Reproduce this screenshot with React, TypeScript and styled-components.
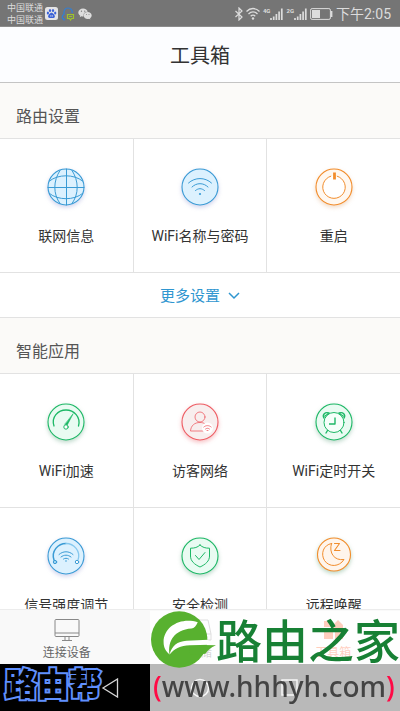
import React from "react";
import styled, { createGlobalStyle } from "styled-components";
import { FaWeixin } from "react-icons/fa";

const Global = createGlobalStyle`
  * { box-sizing: border-box; }
  body { margin: 0; background: #fff; }
  button { font: inherit; color: inherit; border: 0; padding: 0; margin: 0; background: none; cursor: pointer; }
  h1, h2 { margin: 0; font-weight: 400; }
`;

const BLUE = "#3a9bd5";
const GREEN = "#1db866";
const RED = "#ee5d64";
const ORANGE = "#f28d2c";

const Screen = styled.div`
  position: relative;
  display: flex;
  flex-direction: column;
  height: 100vh;
  overflow: hidden;
  color: #333;
  font-family: Roboto, "Noto Sans CJK SC", sans-serif;
`;

const StatusBar = styled.div`
  flex: none;
  display: flex;
  align-items: center;
  justify-content: space-between;
  height: 27px;
  padding: 1px 9px 0 7px;
  background: #757575;
  border-bottom: 1px solid #8c8c8c;
  color: #dcdcdc;
`;

const StatusGroup = styled.div<{ $gap: number }>`
  display: flex;
  align-items: center;
  gap: ${(p) => p.$gap}px;
`;

const Carriers = styled.div`
  font-size: 9px;
  line-height: 12px;
`;

const Network = styled.div`
  display: flex;
  align-items: flex-start;
  height: 14px;
  font: 700 6px/7px Roboto, sans-serif;
`;

const Clock = styled.span`
  font-size: 14px;
  line-height: 20px;
`;

const TitleBar = styled.header`
  flex: none;
  display: flex;
  align-items: center;
  justify-content: center;
  height: 56px;
  background: #fcfdff;
  border-bottom: 1px solid #c4c4c4;
`;

const Title = styled.h1`
  padding-top: 2px;
  font-size: 20px;
  line-height: 28px;
`;

const Content = styled.main`
  flex: 1;
  min-height: 0;
  overflow-y: auto;
  scrollbar-width: none;
`;

const SectionTitle = styled.h2`
  padding: 22px 16px 9px;
  background: #fbfaf8;
  border-bottom: 1px solid #e2e2e2;
  color: #555;
  font-size: 16px;
  line-height: 24px;
`;

const Tools = styled.div`
  display: grid;
  grid-template-columns: repeat(3, 1fr);
  gap: 1px;
  background: #e2e2e2;
  border-bottom: 1px solid #e2e2e2;
`;

const ToolButton = styled.button`
  && {
    display: flex;
    flex-direction: column;
    align-items: center;
    gap: 19px;
    padding: 28px 0 26px;
    background: #fff;
    font-size: 14px;
    line-height: 20px;
    white-space: nowrap;
  }
`;

const Disc = styled.svg<{ $shadow: string }>`
  width: 40px;
  height: 40px;
  overflow: visible;
  fill: none;
  stroke-linecap: round;
  stroke-linejoin: round;
  filter: drop-shadow(0 2px 2px ${(p) => p.$shadow});
`;

const MoreButton = styled.button`
  && {
    display: flex;
    align-items: center;
    justify-content: center;
    gap: 8px;
    width: 100%;
    height: 45px;
    padding-top: 2px;
    border-bottom: 1px solid #e2e2e2;
    background: #fff;
    color: #2f96d0;
    font-size: 15px;
    line-height: 24px;
  }
`;

const TabBar = styled.nav`
  flex: none;
  display: grid;
  grid-template-columns: repeat(3, 1fr);
  height: 55px;
  background: #f9f9f9;
  border-top: 1px solid #ececec;
`;

const Tab = styled.button<{ $active?: boolean }>`
  && {
    display: flex;
    flex-direction: column;
    align-items: center;
    padding-top: 8px;
    gap: 2px;
    color: ${(p) => (p.$active ? "#ff4a10" : "#666")};
    font-size: 12px;
    line-height: 18px;
  }
`;

const SystemNav = styled.nav`
  flex: none;
  display: flex;
  align-items: center;
  justify-content: center;
  gap: 70px;
  height: 47px;
  background: #000;
`;

const SystemButton = styled.button`
  display: flex;
  width: 20px;
  height: 20px;
`;

const CornerMark = styled.div`
  position: absolute;
  left: 5px;
  bottom: 9px;
  color: #000;
  font: 900 32px/40px "Noto Sans CJK SC", sans-serif;
  -webkit-text-stroke: 4px #6090ff;
  paint-order: stroke fill;
`;

const SiteMark = styled.aside`
  position: absolute;
  right: 0;
  bottom: 0;
  width: 250px;
  height: 100px;
  background: rgba(255, 255, 255, 0.725);
  pointer-events: none;
`;

const SiteBrand = styled.div`
  display: flex;
  align-items: center;
  height: 57px;
  padding-left: 1px;
  color: #178034;
  font: 500 46px/50px "Noto Sans CJK SC", sans-serif;
  white-space: nowrap;
`;

const BrandName = styled.span`
  padding-bottom: 4px;
`;

const SiteUrl = styled.div`
  padding-left: 3px;
  color: #444;
  font: 500 28px/36px "Noto Sans", sans-serif;
  white-space: nowrap;
`;

const Paren = styled.span`
  color: #ff0a45;
`;

type DiscKind = { line: string; fill: string; shadow: string };
const kinds: Record<string, DiscKind> = {
  blue: { line: BLUE, fill: "#dcf1fe", shadow: "rgba(90,100,190,.28)" },
  green: { line: GREEN, fill: "#e9fbf2", shadow: "rgba(20,120,70,.28)" },
  red: { line: RED, fill: "#f8eeee", shadow: "rgba(230,50,60,.3)" },
  orange: { line: ORANGE, fill: "#fff8f0", shadow: "rgba(200,110,30,.25)" },
  moon: { line: ORANGE, fill: "#fff5ec", shadow: "rgba(30,120,60,.3)" },
};

function Badge({ kind, r = 18, cy = 20, children }: { kind: string; r?: number; cy?: number; children: React.ReactNode }) {
  const k = kinds[kind];
  return (
    <Disc viewBox="0 0 40 40" $shadow={k.shadow} stroke={k.line} strokeWidth="1" aria-hidden="true">
      <circle cx="20" cy={cy} r={r} fill={k.fill} strokeWidth="1.1" />
      {children}
    </Disc>
  );
}

const GlobeIcon = () => (
  <Badge kind="blue">
    <path d="M20.500 2v36M2 20.500h36" />
    <path d="M14 3.500C7 14 7 27 14 36.500M26 3.500c7 10.500 7 23.500 0 33" />
    <path d="M3.500 14C12 7 28 7 36.500 14M3.500 26.500c8.500 7 24.500 7 33 0" />
  </Badge>
);

const WifiIcon = () => (
  <Badge kind="blue">
    <path d="M8.500 16c6.500-6 16.500-6 23 0M12 20c4.500-4.500 11.500-4.500 16 0M15.500 23.500c3-2.500 6-2.500 9 0" />
    <circle cx="20" cy="27" r="1.100" fill={BLUE} stroke="none" />
  </Badge>
);

const PowerIcon = () => (
  <Badge kind="orange">
    <circle cx="20" cy="20" r="11.300" fill="#fff" stroke="none" />
    <path d="M16.800 9.200a11.300 11.300 0 1 0 6.400 0" />
    <path d="M20.500 5.500v7" strokeWidth="2.800" strokeLinecap="butt" />
  </Badge>
);

const SpeedIcon = () => (
  <Badge kind="green">
    <path d="M8 24C5 15 12 8 20 8s15 7 12.500 16" strokeWidth="1.300" />
    <path d="M27 12l-6 11.500-2-1z" fill={GREEN} strokeWidth=".6" />
    <circle cx="20" cy="25" r="2.200" fill="#fff" />
  </Badge>
);

const GuestIcon = () => (
  <Badge kind="red">
    <circle cx="20" cy="15" r="5" strokeWidth=".8" />
    <path d="M24 29H10.500c.5-5.500 4-8.500 9.500-8.500 2 0 3.500.4 5 1.200" strokeWidth=".8" />
    <circle cx="27.500" cy="26" r="5.500" fill="#fff" stroke="none" />
    <path d="M23.800 25c2.200-1.900 5.200-1.900 7.400 0M25.500 27c1.200-1 2.800-1 4 0M27 28.500h1" strokeWidth=".8" />
  </Badge>
);

const AlarmIcon = () => (
  <Badge kind="green">
    <path d="M10 16c-2-3 1-6.500 5-5M30 16c2-3-1-6.500-5-5M11 14l3-2M29 14l-3-2" strokeWidth="1.400" />
    <circle cx="20" cy="20.500" r="10" fill="#f5fffa" />
    <path d="M21 15.500V22h-6" strokeWidth="1.400" strokeLinecap="butt" />
    <path d="M13.500 28.500L12 31M26.500 28.500L28 31" strokeWidth="1.400" />
  </Badge>
);

const SignalIcon = () => (
  <Badge kind="blue">
    <path d="M8 24C5 15 12 7.500 20 7.500" strokeWidth="1.500" />
    <path d="M20 7.500c8 0 15 7.500 12 16.500" stroke="#86c8ee" strokeWidth="1.300" />
    <path d="M13 18.500c4-3.700 10-3.700 14 0M15 21c3-2.500 7-2.500 10 0M17.500 23c1.500-1 3.500-1 5 0" />
    <circle cx="20" cy="25" r=".8" fill={BLUE} stroke="none" />
    <circle cx="9" cy="26" r="1.700" fill="#9fd3f1" />
    <circle cx="31" cy="26" r="1.700" fill="#fff" />
  </Badge>
);

const ShieldIcon = () => (
  <Badge kind="green">
    <path d="M20 9c2.500 2.500 5.500 3.200 9.500 3.200V20c0 5-4 8.500-9.500 11-5.500-2.500-9.500-6-9.500-11v-7.800c4 0 7-.7 9.500-3.200z" />
    <path d="M15.500 19.500l3.500 4 6-7" />
  </Badge>
);

const MoonIcon = () => (
  <Badge kind="moon" r={16.5} cy={18.5}>
    <path d="M17.500 7.500C9 9 6.500 18 10.500 24.500c4.500 7 15 6.500 19.500-1C20.500 25 14.500 17 17.500 7.500z" />
    <path d="M20.500 7.500h5l-5 7h5.500" strokeWidth="1.100" />
  </Badge>
);

const settings = [
  { label: "联网信息", Icon: GlobeIcon },
  { label: "WiFi名称与密码", Icon: WifiIcon },
  { label: "重启", Icon: PowerIcon },
];

const apps = [
  { label: "WiFi加速", Icon: SpeedIcon },
  { label: "访客网络", Icon: GuestIcon },
  { label: "WiFi定时开关", Icon: AlarmIcon },
  { label: "信号强度调节", Icon: SignalIcon },
  { label: "安全检测", Icon: ShieldIcon },
  { label: "远程唤醒", Icon: MoonIcon },
];

function ToolGrid({ items }: { items: typeof apps }) {
  return (
    <Tools>
      {items.map(({ label, Icon }) => (
        <ToolButton key={label} type="button">
          <Icon />
          {label}
        </ToolButton>
      ))}
    </Tools>
  );
}

function Signal({ label }: { label: string }) {
  return (
    <Network>
      {label}
      <svg width="13" height="14" viewBox="0 0 13 14" stroke="currentColor" strokeWidth="1.700" aria-hidden="true">
        <path d="M1 13v-2M3.700 13V9.500M6.400 13V7M9.100 13V4.500M11.800 13V1.500" />
      </svg>
    </Network>
  );
}

function PhoneStatus() {
  return (
    <StatusBar>
      <StatusGroup $gap={2}>
        <Carriers>
          <div>中国联通</div>
          <div>中国联通</div>
        </Carriers>
        <svg width="13" height="13" viewBox="0 0 13 13" aria-hidden="true">
          <rect width="13" height="13" rx="2.500" fill="#e4e4e6" />
          <g fill="#3b62d8">
            <ellipse cx="2.900" cy="6" rx="1.100" ry="1.500" />
            <ellipse cx="5" cy="3.500" rx="1.100" ry="1.600" />
            <ellipse cx="8" cy="3.500" rx="1.100" ry="1.600" />
            <ellipse cx="10.200" cy="6" rx="1.100" ry="1.500" />
            <path d="M6.500 5.800c1.500 0 3.800 2.700 3.300 4.200-.5 1.400-2 1-3.300 1s-2.800.4-3.300-1c-.5-1.500 1.800-4.200 3.300-4.200z" />
          </g>
          <path d="M5.800 8v1.800M7.300 8v1.800" stroke="#e4e4e6" strokeWidth=".7" />
        </svg>
        <svg width="16" height="14" viewBox="0 0 16 14" fill="none" aria-hidden="true">
          <path d="M5 12.500c-1 .8-2 0-1.500-1-.8 0-1.500-.5-1.200-2 .2-1 1-1.500 1.700-2C3.500 3.500 5 1 8 1s4.500 2 4.200 5" stroke="#2f7fd8" strokeWidth="1.200" />
          <path d="M7.500 7.500h6v4h-2l-1 1.500-1-1.500h-2z" stroke="#9cc42c" strokeWidth="1.200" />
          <path d="M9 9.500h3" stroke="#9cc42c" />
        </svg>
        <FaWeixin size={14} color="#dedede" aria-hidden="true" />
      </StatusGroup>
      <StatusGroup $gap={3}>
        <svg width="8" height="14" viewBox="0 0 8 14" fill="none" stroke="currentColor" strokeWidth="1.200" aria-hidden="true">
          <path d="M.5 4l6.500 6-3 3V1l3 3-6.500 6" />
        </svg>
        <svg width="14" height="13" viewBox="0 0 14 13" fill="none" stroke="currentColor" strokeWidth="1.300" aria-hidden="true">
          <path d="M.5 4.500c3.800-4 9.200-4 13 0M2.500 7c2.700-2.800 6.300-2.800 9 0M4.700 9.200c1.400-1.400 3.200-1.400 4.600 0" />
          <circle cx="7" cy="11.500" r="1.200" fill="currentColor" stroke="none" />
        </svg>
        <Signal label="4G" />
        <Signal label="2G" />
        <svg width="23" height="12" viewBox="0 0 23 12" aria-hidden="true">
          <rect x=".6" y=".6" width="19.800" height="10.800" rx="1.500" fill="none" stroke="currentColor" />
          <rect x="2" y="2" width="8" height="8" fill="currentColor" />
          <path d="M21.500 3v6" stroke="currentColor" strokeWidth="1.800" />
        </svg>
        <Clock>下午2:05</Clock>
      </StatusGroup>
    </StatusBar>
  );
}

function SiteLogo() {
  return (
    <svg width="65" height="57" viewBox="33 35 196 170" aria-hidden="true">
      <circle cx="118" cy="120" r="85" fill="#58b12f" />
      <path d="M150 136l79 1c-16 6-25 15-32 26l-47 4z" fill="#58b12f" />
      <path d="M174 68C124 52 71 80 71 128c0 16 7 28 18 37-6-40 14-74 66-78 8 0 14-8 19-19z" fill="#fff" />
      <path d="M89 165c7-26 23-39 51-41l66-3 3 15-59 1c-28 1-46 10-61 28z" fill="#fff" />
    </svg>
  );
}

export default function App() {
  return (
    <Screen>
      <Global />
      <PhoneStatus />
      <TitleBar>
        <Title>工具箱</Title>
      </TitleBar>
      <Content>
        <SectionTitle>路由设置</SectionTitle>
        <ToolGrid items={settings} />
        <MoreButton type="button">
          更多设置
          <svg width="12" height="8" viewBox="0 0 12 8" fill="none" stroke="currentColor" strokeWidth="1.500" aria-hidden="true">
            <path d="M1 1l5 5 5-5" />
          </svg>
        </MoreButton>
        <SectionTitle>智能应用</SectionTitle>
        <ToolGrid items={apps} />
      </Content>
      <TabBar>
        <Tab type="button">
          <svg width="26" height="24" viewBox="0 0 26 24" fill="none" stroke="#888" aria-hidden="true">
            <rect x="1" y="1.500" width="24" height="17" rx="1" />
            <path d="M1 15h24M11 18.500V22M15 18.500V22M8 22.500h10" />
          </svg>
          连接设备
        </Tab>
        <Tab type="button">
          <svg width="26" height="24" viewBox="0 0 26 24" fill="none" stroke="#888" aria-hidden="true">
            <path d="M4 16L7 2h14l3 14v6H4zM4 16h20M19 19h2" />
          </svg>
          存储
        </Tab>
        <Tab type="button" $active>
          <svg width="26" height="24" viewBox="0 0 26 24" fill="currentColor" aria-hidden="true">
            <path d="M4 3h7v6H4zM13 7l5-5 5 5v4H13zM4 11h9v10H4zM15 13h8v8h-8z" />
          </svg>
          工具箱
        </Tab>
      </TabBar>
      <SystemNav>
        <SystemButton type="button" aria-label="返回">
          <svg width="20" height="20" viewBox="0 0 20 20" fill="none" stroke="#d5d5d5" strokeWidth="1.300" aria-hidden="true">
            <path d="M17.500 1v18L3 10z" />
          </svg>
        </SystemButton>
        <SystemButton type="button" aria-label="主页">
          <svg width="20" height="20" viewBox="0 0 20 20" fill="none" stroke="#e5e5e5" strokeWidth="1.500" aria-hidden="true">
            <circle cx="10" cy="10" r="8.500" />
          </svg>
        </SystemButton>
        <SystemButton type="button" aria-label="最近任务">
          <svg width="20" height="20" viewBox="0 0 20 20" fill="none" stroke="#e5e5e5" strokeWidth="1.500" aria-hidden="true">
            <rect x="2" y="2" width="15" height="15" />
          </svg>
        </SystemButton>
      </SystemNav>
      <CornerMark>路由帮</CornerMark>
      <SiteMark>
        <SiteBrand>
          <SiteLogo />
          <BrandName>路由之家</BrandName>
        </SiteBrand>
        <SiteUrl>
          <Paren>(</Paren>www.hhhyh.com<Paren>)</Paren>
        </SiteUrl>
      </SiteMark>
    </Screen>
  );
}
